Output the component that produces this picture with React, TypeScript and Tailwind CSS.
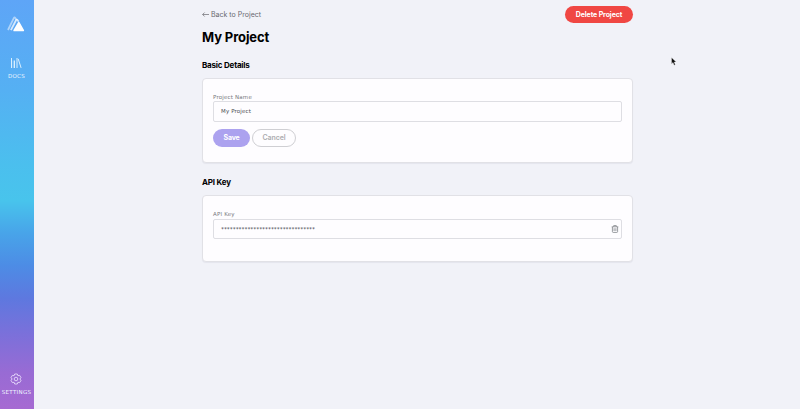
import React from "react";

function Logo() {
  return (
    <svg className="block h-[18px] w-[18px]" viewBox="0 0 18 18" fill="none">
      <path d="M1 15 6.8 3.2q.8-1.5 1.8.2l1 1.6" stroke="#fff" strokeOpacity=".5" strokeWidth="1.8" />
      <path d="M3.9 15.2 9 5.3q.8-1.3 1.8.1l.8 1.3" stroke="#fff" strokeOpacity=".75" strokeWidth="1.8" />
      <path d="M7.2 15.4 11.8 7.8 16.2 15.4Z" fill="#fff" stroke="#fff" strokeWidth="1.8" strokeLinejoin="round" />
    </svg>
  );
}

function DocsIcon() {
  return (
    <svg className="block h-3 w-3" viewBox="0 0 12 12" fill="none" stroke="#e8f6ff" strokeWidth=".9">
      <path d="M1.5 1v10M4.5 3.5V11M7 1v10M8.2 1.8l2.9 9.1" />
      <path d="M3.3 3.5V11" strokeOpacity=".45" />
    </svg>
  );
}

function GearIcon() {
  return (
    <svg className="block h-3 w-3" viewBox="0 0 12 12" fill="none" stroke="#e6d9fa" strokeWidth=".9" strokeLinejoin="round">
      <path d="M4.7 1h2.6l.6 1.7 1.8-.3 1.3 2.3L9.8 6l1.2 1.3-1.3 2.3-1.8-.3-.6 1.7H4.7l-.6-1.7-1.8.3L1 7.3 2.2 6 1 4.7l1.3-2.3 1.8.3z" />
      <circle cx="6" cy="6" r="1.8" />
    </svg>
  );
}

function TrashIcon() {
  return (
    <svg className="block h-2 w-2" viewBox="0 0 8 8" fill="none" stroke="#7d8186" strokeWidth=".8">
      <path d="M.7 1.8h6.6M2.7 1.7V.6h2.6v1.1M1.4 2v4.6q0 .8.8.8h3.6q.8 0 .8-.8V2M3.1 3.2v2.8M4.9 3.2v2.8" />
    </svg>
  );
}

function Sidebar() {
  return (
    <aside className="flex w-[34px] shrink-0 flex-col items-center bg-[linear-gradient(180deg,#5ea5f7_0%,#55b0f3_22%,#4bbfee_40%,#48c4ec_49%,#48a4e9_57%,#4d8ce5_65%,#5e78df_73%,#7c70da_82%,#986bd4_91%,#a66ad2_100%)] font-['DejaVu_Sans',sans-serif] text-[#f0f5ff]">
      <div className="mt-[15px] mr-[2px]">
        <Logo />
      </div>
      <div className="mt-6 mr-px flex flex-col items-center">
        <DocsIcon />
        <span className="mt-[3px] text-[5.5px] leading-[8px] tracking-[0.3px]">DOCS</span>
      </div>
      <div className="mt-auto mr-px mb-[13px] flex flex-col items-center">
        <GearIcon />
        <span className="mt-[3px] text-[5.5px] leading-[8px] tracking-[0.3px]">SETTINGS</span>
      </div>
    </aside>
  );
}

function Card({ className, children }: { className: string; children: React.ReactNode }) {
  return (
    <section className={"rounded-[4px] border border-[#e1e1e6] bg-[#fefdff] px-[10px] shadow-[0_1px_1px_rgba(40,40,70,0.06)] " + className}>
      {children}
    </section>
  );
}

export default function App() {
  return (
    <div className="relative flex h-[409px] w-[800px] overflow-hidden bg-[#f1f2f8] font-['Inter',sans-serif] text-black">
      <Sidebar />
      <main className="ml-[168px] w-[431px]">
        <header className="flex h-[23px] items-start justify-between pt-[6px]">
          <a className="mt-[3px] flex items-center text-[7px] leading-[11px] text-[#68696f]">
            <svg className="mr-[2px] h-[7px] w-[7px]" viewBox="0 0 7 7" fill="none" stroke="currentColor" strokeWidth=".7">
              <path d="M7 3.5H.7M2.6 1.5l-2 2 2 2" />
            </svg>
            <span className="whitespace-nowrap tracking-[0.01px]">Back to Project</span>
          </a>
          <button className="h-[17px] w-[68px] shrink-0 rounded-full bg-[#f04743] text-[7px] leading-[17px] font-bold tracking-[-0.1px] whitespace-nowrap text-white">
            Delete Project
          </button>
        </header>
        <h1 className="mt-[6px] text-[13px] leading-4 font-bold tracking-[-0.1px]">My Project</h1>
        <h2 className="mt-[15px] text-[8px] leading-[10px] font-bold tracking-[-0.2px]">Basic Details</h2>
        <Card className="mt-[8px] h-[85px] pt-[14px]">
          <div className="font-['DejaVu_Sans',sans-serif] text-[5.5px] leading-[8px] tracking-[0.18px] text-[#77787e]">Project Name</div>
          <div className="flex h-[21px] items-center rounded-[2px] border border-[#dedee3] pl-[7px] font-['DejaVu_Sans',sans-serif] text-[5.5px] tracking-[0.15px] text-[#4b4d53]">My Project</div>
          <div className="mt-[7px] flex gap-[2px] text-[7px]">
            <button className="h-[18px] w-[37px] rounded-full bg-[#aca2ef] font-bold tracking-[-0.2px] text-white">Save</button>
            <button className="h-[18px] w-[44px] rounded-full border border-[#cfcfd3] font-semibold tracking-[-0.1px] text-[#acacb0]">Cancel</button>
          </div>
        </Card>
        <h2 className="mt-[14px] text-[8px] leading-[10px] font-bold tracking-[-0.2px]">API Key</h2>
        <Card className="mt-[8px] h-[67px] pt-[14px]">
          <div className="font-['DejaVu_Sans',sans-serif] text-[5.5px] leading-[8px] tracking-[0.18px] text-[#77787e]">API Key</div>
          <div className="mt-px flex h-[20px] items-center justify-between rounded-[2px] border border-[#dedee3] pr-[2px] pl-[7px] text-[#505259]">
            <span className="mt-[2px] text-[6px] leading-[8px] tracking-[-0.07px]">********************************</span>
            <TrashIcon />
          </div>
        </Card>
      </main>
      <svg className="absolute top-[57px] left-[671px] h-[9px] w-[6px]" viewBox="0 0 6 9">
        <path d="M.5.4v6.5l1.5-1.4 1.1 2.7 1.2-.5-1.1-2.6h2z" fill="#111" stroke="#fff" strokeWidth=".35" />
      </svg>
    </div>
  );
}
